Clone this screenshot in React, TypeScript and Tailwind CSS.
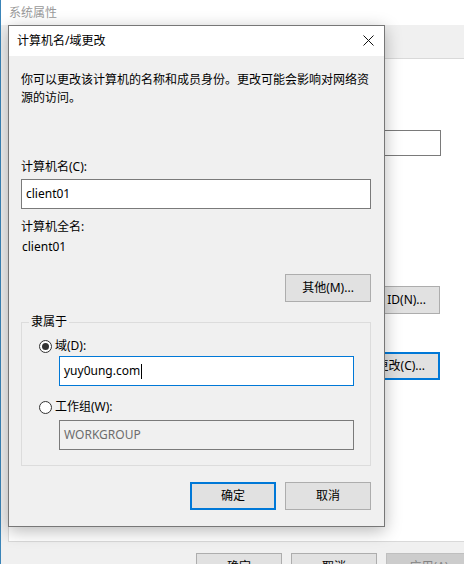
import React from "react";

const font = { fontFamily: '"Noto Sans", "Noto Sans CJK SC", sans-serif' };

function Btn({ children, primary, disabled, className = "" }: { children: React.ReactNode; primary?: boolean; disabled?: boolean; className?: string }) {
  return (
    <div
      className={
        "h-[28px] w-[86px] shrink-0 flex items-center justify-center text-[12px] " +
        (primary
          ? "border-2 border-[#0078d7] bg-[#e1e1e1] text-black "
          : disabled
          ? "border border-[#bfbfbf] bg-[#cccccc] text-[#838383] "
          : "border border-[#adadad] bg-[#e1e1e1] text-black ") +
        className
      }
    >
      {children}
    </div>
  );
}

function Radio({ checked, label }: { checked?: boolean; label: string }) {
  return (
    <div className="flex items-center h-[18px] pl-[17px] gap-[3px]">
      <div className="w-[13px] h-[13px] rounded-full border border-[#333] bg-white flex items-center justify-center">
        {checked && <div className="w-[7px] h-[7px] rounded-full bg-[#333]" />}
      </div>
      <span className="text-[12px] text-black">{label}</span>
    </div>
  );
}

function Dialog() {
  return (
    <div className="absolute left-[8px] top-[25px] w-[377px] h-[502px] border border-[#777777] bg-[#f0f0f0] flex flex-col shadow-[0_4px_16px_rgba(0,0,0,0.28)]">
      <div className="h-[30px] shrink-0 bg-white flex items-center justify-between pl-[8px] pr-[10px]">
        <span className="text-[12px] text-black">计算机名/域更改</span>
        <svg width="11" height="11" viewBox="0 0 11 11" className="mt-[-1px]">
          <path d="M0.5 0.5 L10.5 10.5 M10.5 0.5 L0.5 10.5" stroke="#111" strokeWidth="1" />
        </svg>
      </div>
      <div className="flex flex-col pl-[12px] pr-[13px] pt-[15px] text-[12px] leading-[18px] text-black">
        <p>你可以更改该计算机的名称和成员身份。更改可能会影响对网络资源的访问。</p>
        <div className="mt-[51px]">计算机名(C):</div>
        <div className="mt-[3px] h-[30px] border border-[#7a7a7a] bg-white flex items-center pl-[4px]">client01</div>
        <div className="mt-[9px]">计算机全名:</div>
        <div className="mt-[2px] pl-[1px]">client01</div>
        <div className="mt-[18px] flex justify-end">
          <Btn>其他(M)...</Btn>
        </div>
        <fieldset className="mt-[11px] h-[153px] border border-[#dcdcdc] flex flex-col">
          <legend className="ml-[7px] px-[2px] leading-[18px]">隶属于</legend>
          <div className="pt-[6px]">
            <Radio checked label="域(D):" />
            <div className="ml-[37px] mr-[16px] mt-[1px] h-[30px] border border-[#0078d7] bg-white flex items-center pl-[4px]">
              <span>yuy0ung.com</span>
              <span className="inline-block w-px h-[15px] bg-black ml-[1px]" />
            </div>
            <div className="mt-[12px]">
              <Radio label="工作组(W):" />
            </div>
            <div className="ml-[37px] mr-[16px] mt-[4px] h-[30px] border border-[#7a7a7a] bg-[#f0f0f0] flex items-center pl-[4px] text-[#6d6d6d]">
              WORKGROUP
            </div>
          </div>
        </fieldset>
        <div className="mt-[16px] flex justify-end gap-[9px]">
          <Btn primary>确定</Btn>
          <Btn>取消</Btn>
        </div>
      </div>
    </div>
  );
}

export default function App() {
  return (
    <div className="relative w-[464px] h-[564px] overflow-hidden bg-[#f0f0f0] flex" style={font}>
      <div className="w-px h-full shrink-0 bg-[#3a84b8]" />
      <div className="flex-1 flex flex-col">
        <div className="h-[25px] shrink-0 bg-white flex items-center justify-between pl-[8px]">
          <span className="text-[12px] text-[#9a9a9a]">系统属性</span>
          <svg width="10" height="12" viewBox="0 0 10 12" className="mr-[-4px]">
            <path d="M0.5 0.5 L6 6 L0.5 11.5" stroke="#999" strokeWidth="1" fill="none" />
          </svg>
        </div>
        <div className="h-[33px] shrink-0 bg-[#f0f0f0]" />
        <div className="ml-[7px] w-[470px] h-[484px] shrink-0 border border-[#d9d9d9] bg-white flex flex-col pl-[241px]">
          <div className="mt-[71px] w-[191px] h-[26px] border border-[#7a7a7a] bg-white" />
          <div className="mt-[130px] w-[190px] h-[28px] border border-[#adadad] bg-[#e1e1e1] flex items-center justify-end pr-[13px] text-[12px] text-black">
            网络 ID(N)...
          </div>
          <div className="mt-[38px] w-[190px] h-[28px] border-2 border-[#0078d7] bg-[#e1e1e1] flex items-center justify-end pr-[13px] text-[12px] text-black">
            更改(C)...
          </div>
        </div>
        <div className="mt-[11px] shrink-0 flex gap-[9px] pl-[195px]">
          <Btn>确定</Btn>
          <Btn>取消</Btn>
          <Btn disabled>应用(A)</Btn>
        </div>
      </div>
      <Dialog />
    </div>
  );
}
